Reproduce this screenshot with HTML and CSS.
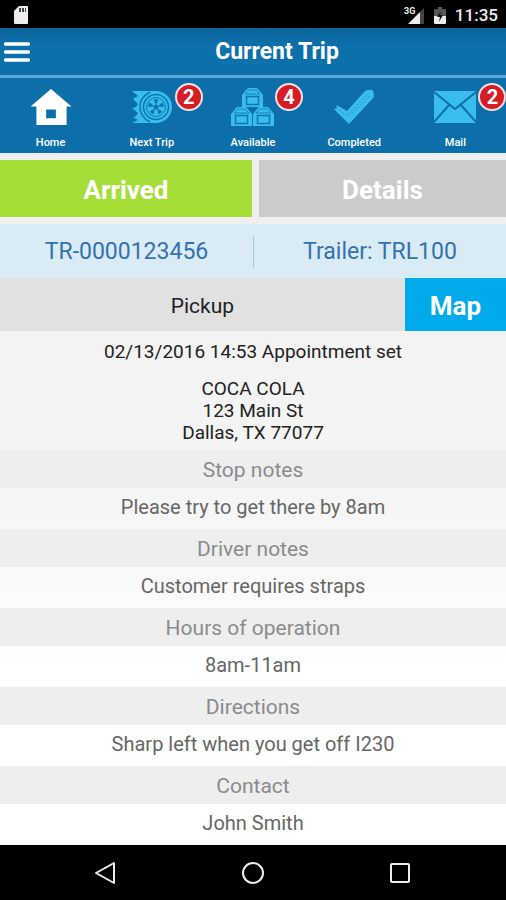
FILE: index.html
```html
<!DOCTYPE html>
<html lang="en">
<head>
<meta charset="utf-8">
<meta name="viewport" content="width=device-width, initial-scale=1">
<title>Current Trip</title>
<link rel="stylesheet" href="styles.css">
</head>
<body>
<div class="statusbar">
  <svg class="sd" width="14" height="18" viewBox="0 0 14 18"><path d="M5 0h8q1 0 1 1v16q0 1-1 1H1q-1 0-1-1V5z" fill="#eee"/><path d="M5 2h2v4H5zM8 2h2v4H8zM11 2h1v4h-1z" fill="#444"/></svg>
  <div class="status-right">
    <svg width="22" height="18" viewBox="0 0 22 18"><path d="M21 2v16H17V6z" fill="#444"/><path d="M17 6v12H5z" fill="#eee"/><text class="net" x="1" y="8">3G</text></svg>
    <svg class="battery" width="12" height="17" viewBox="0 0 12 17"><path d="M4 0h4v2h3q1 0 1 1v6H0V3q0-1 1-1h3z" fill="#555"/><path d="M0 9h12v7q0 1-1 1H1q-1 0-1-1z" fill="#eee"/><path d="M7 4L3 10h3l-1 5 4-7H6z" fill="#111"/></svg>
    <span class="clock">11:35</span>
  </div>
</div>
<header class="header">
  <button class="menu" aria-label="Menu"><svg width="26" height="20" viewBox="0 0 26 20"><path d="M1.500 2h23M1.500 10h23M1.500 18h23" stroke="#fff" stroke-width="3.500" stroke-linecap="round"/></svg></button>
  <h1 class="title">Current Trip</h1>
</header>
<nav class="tabs">
  <a class="tab" href="#home">
    <span class="icon"><svg width="42" height="36" viewBox="0 0 42 37"><path fill="#fff" fill-rule="evenodd" d="M21 0l21 18h-5v19H6V18H0zM16 21v9h10v-9z"/></svg></span>
    <span>Home</span>
  </a>
  <a class="tab" href="#next">
    <span class="icon"><svg width="42" height="36" viewBox="0 0 42 36"><path fill="#38bdee" d="M1 2h25v32H1l6-3-5-3q3 0 5-4l-6-5q4 0 6-4l-5-5 5-3z"/><circle cx="25" cy="18" r="16" fill="#38bdee"/><g fill="none" stroke="#0e76b0"><path d="M19 3Q9 8 9 18t10 15" stroke-width="1.500"/><circle cx="25" cy="18" r="12.500" stroke-width="1.500"/><circle cx="25" cy="18" r="9.500"/></g><g fill="#0e76b0"><path id="spoke" d="M22.500 10.500q2.500-1 5 0L25 16z"/><use href="#spoke" transform="rotate(72 25 18)"/><use href="#spoke" transform="rotate(144 25 18)"/><use href="#spoke" transform="rotate(216 25 18)"/><use href="#spoke" transform="rotate(288 25 18)"/><circle cx="25" cy="18" r="2.500"/></g></svg><b class="badge">2</b></span>
    <span>Next Trip</span>
  </a>
  <a class="tab" href="#available">
    <span class="icon"><svg width="44" height="38" viewBox="0 0 44 38"><defs><g id="box"><path d="M0 7l5-6q1-1 2-1h7q1 0 2 1l5 6v12H0z" fill="#38bdee"/><path d="M3 6l4-4h7l4 4z" fill="none" stroke="#1685bd"/><path d="M4.500 8.500h12v8h-12z" fill="none" stroke="#0e76b0" stroke-width="1.500"/></g></defs><use href="#box" x="11" y="0"/><use href="#box" x="0" y="19"/><use href="#box" x="22" y="19"/></svg><b class="badge">4</b></span>
    <span>Available</span>
  </a>
  <a class="tab" href="#completed">
    <span class="icon"><svg width="42" height="36" viewBox="0 0 42 36"><path fill="#38bdee" d="M1 20l3-1-1-3 4 2 7 4L32 2q4-2 7-1 2 1 2 7L16 35z"/><path d="M6 21l9 7L37 7M15 25L35 5" fill="none" stroke="#1b93ca" stroke-dasharray="2 2"/></svg></span>
    <span>Completed</span>
  </a>
  <a class="tab" href="#mail">
    <span class="icon"><svg width="42" height="32" viewBox="0 0 42 32"><path fill="#38bdee" d="M0 0h42v32H0z"/><path d="M0 1l21 17L42 1M0 31l15-17M42 31L27 14" fill="none" stroke="#0e6fa9" stroke-width="2"/></svg><b class="badge">2</b></span>
    <span>Mail</span>
  </a>
</nav>
<main class="content">
  <div class="actions">
    <button class="action arrived">Arrived</button>
    <button class="action details">Details</button>
  </div>
  <div class="trip"><span class="trip-id">TR-0000123456</span><span class="trip-trailer">Trailer: TRL100</span></div>
  <div class="stop"><h2 class="stop-type">Pickup</h2><button class="map">Map</button></div>
  <section class="appointment">
    <p class="when">02/13/2016 14:53 Appointment set</p>
    <address class="address">COCA COLA<br>123 Main St<br>Dallas, TX 77077</address>
  </section>
  <section class="note"><h3>Stop notes</h3><p>Please try to get there by 8am</p></section>
  <section class="note"><h3>Driver notes</h3><p>Customer requires straps</p></section>
  <section class="note"><h3>Hours of operation</h3><p>8am-11am</p></section>
  <section class="note"><h3>Directions</h3><p>Sharp left when you get off I230</p></section>
  <section class="note"><h3>Contact</h3><p>John Smith</p></section>
</main>
<footer class="navbar">
  <button aria-label="Back"><svg width="24" height="24" viewBox="0 0 24 24"><path d="M20 2v20L2 12z"/></svg></button>
  <button aria-label="Home"><svg width="24" height="24" viewBox="0 0 24 24"><circle cx="12" cy="12" r="10"/></svg></button>
  <button aria-label="Recent apps"><svg width="24" height="24" viewBox="0 0 24 24"><rect x="3" y="3" width="18" height="18" rx="1"/></svg></button>
</footer>
</body>
</html>
```
FILE: styles.css
```css
* { box-sizing: border-box; }
body {
  margin: 0;
  min-height: 100vh;
  display: flex;
  flex-direction: column;
  font-family: Roboto, "Liberation Sans", sans-serif;
  background: #f0f0f0;
}
h1, h2, h3, p { margin: 0; font-weight: 400; }
button { border: 0; padding: 0; font-family: inherit; cursor: pointer; }
svg { display: block; }

.statusbar {
  height: 28px;
  padding: 2px 8px 0 14px;
  display: flex;
  align-items: center;
  justify-content: space-between;
  background: #000;
  color: #eee;
}
.status-right { display: flex; align-items: center; }
.net { font-size: 9px; font-weight: 700; fill: #eee; }
.battery { margin: 0 9px; }
.clock { font-size: 17px; font-weight: 500; }

.header {
  height: 50px;
  display: grid;
  grid-template-columns: 48px 1fr;
  align-items: center;
  background: linear-gradient(#0b659b, #0c70ab 40%);
  border-bottom: 3px solid #58a9d6;
}
.menu { padding-left: 4px; background: none; }
.title {
  text-align: center;
  font-size: 23px;
  line-height: 28px;
  font-weight: 700;
  color: #fff;
}

.tabs {
  height: 75px;
  display: grid;
  grid-template-columns: repeat(5, 1fr);
  background: #0c6fa9;
}
.tab {
  display: flex;
  flex-direction: column;
  align-items: center;
  padding-top: 8px;
  color: #fff;
  font-size: 11px;
  line-height: 14px;
  font-weight: 500;
  text-decoration: none;
}
.icon {
  position: relative;
  height: 42px;
  margin-bottom: 8px;
  display: flex;
  align-items: center;
}
.badge {
  position: absolute;
  top: -3px;
  left: 44px;
  width: 28px;
  height: 28px;
  border: 2px solid #f0dfe2;
  border-radius: 50%;
  background: #d61c25;
  font-size: 20px;
  line-height: 24px;
  font-weight: 700;
  text-align: center;
}

.content { flex: 1; background: linear-gradient(#eee, #f2f2f2 24%, #f5f5f5 50%, #fff 75%); }
.actions {
  display: grid;
  grid-template-columns: 51fr 50fr;
  gap: 7px;
  padding: 7px 0;
}
.action {
  height: 57px;
  padding-top: 2px;
  color: #fff;
  font-size: 26px;
  font-weight: 700;
}
.arrived { background: #a5de37; }
.details { background: #cbcbcb; }
.trip {
  height: 54px;
  padding-top: 2px;
  display: grid;
  grid-template-columns: 1fr 1fr;
  align-items: center;
  background: #d9ebf4;
  color: #3273ac;
  font-size: 23px;
  line-height: 32px;
  text-align: center;
}
.trip-trailer { border-left: 1px solid #a9c5d8; }
.stop {
  height: 53px;
  display: grid;
  grid-template-columns: 4fr 1fr;
  align-items: center;
  background: #e1e1e1;
}
.stop-type { padding-top: 2px; font-size: 21px; text-align: center; color: #222; }
.map {
  height: 100%;
  padding-top: 2px;
  background: #00aaeb;
  color: #fff;
  font-size: 26px;
  font-weight: 700;
}
.appointment {
  padding: 10px 0 6px;
  text-align: center;
  font-size: 19px;
  line-height: 22px;
  color: #222;
}
.address { margin-top: 15px; font-style: normal; }
.note { text-align: center; }
.note h3 {
  height: 38px;
  font-size: 21px;
  line-height: 40px;
  color: #8b8b8b;
  background: #eee;
}
.note p {
  height: 41px;
  font-size: 20px;
  line-height: 38px;
  color: #666;
}

.navbar {
  height: 55px;
  padding: 0 32px;
  display: grid;
  grid-template-columns: repeat(3, 1fr);
  background: #000;
}
.navbar button {
  display: flex;
  align-items: center;
  justify-content: center;
  background: none;
}
.navbar svg { fill: none; stroke: #eee; stroke-width: 2; stroke-linejoin: round; }
```
